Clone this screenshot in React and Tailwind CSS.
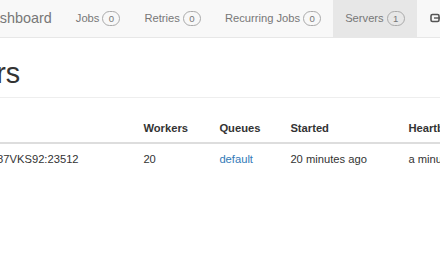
import React from "react";

function Badge({ n }) {
  return (
    <span className="ml-[3px] inline-flex h-[15px] min-w-[18px] shrink-0 items-center justify-center rounded-full border border-[#aaa] px-[5px] text-[9.6px] leading-none text-[#777]">
      {n}
    </span>
  );
}

function NavItem({ label, n, active }) {
  return (
    <div className={`flex h-full shrink-0 items-center whitespace-nowrap px-[12px] ${active ? "bg-[#e7e7e7]" : ""}`}>
      <span>{label}</span>
      <Badge n={n} />
    </div>
  );
}

export default function App() {
  return (
    <div
      className="relative h-[264px] w-[440px] overflow-hidden bg-white text-[#333]"
      style={{ fontFamily: '"Liberation Sans", Arial, Helvetica, sans-serif' }}
    >
      <div className="flex h-[38px] w-[700px] items-center border-b border-[#e7e7e7] bg-[#f8f8f8] text-[11.2px] text-[#777]">
        <div className="ml-[-77px] shrink-0 whitespace-nowrap pr-[12px] text-[14.4px] text-[#777]">Hangfire Dashboard</div>
        <NavItem label="Jobs" n="0" />
        <NavItem label="Retries" n="0" />
        <NavItem label="Recurring Jobs" n="0" />
        <NavItem label="Servers" n="1" active />
        <div className="flex h-full shrink-0 items-center gap-[4px] whitespace-nowrap px-[12px]">
          <svg width="11" height="11" viewBox="0 0 11 11" className="ml-[1px] shrink-0">
            <rect x="1" y="1.5" width="8" height="7" rx="1.5" fill="none" stroke="#555" strokeWidth="1.6" />
            <path d="M4 5h6" stroke="#555" strokeWidth="1.4" />
          </svg>
          <span>Back to site</span>
        </div>
      </div>

      <div className="ml-[-75px] w-[700px]">
        <h1 className="mt-[20px] ml-[-4px] border-b border-[#eee] pb-[7px] text-[28.8px] font-normal leading-[1.1] whitespace-nowrap text-[#333]">
          Servers
        </h1>
        <table className="mt-[16px] table-fixed border-collapse text-left text-[11.2px] leading-[16px]">
          <colgroup>
            <col className="w-[212px]" />
            <col className="w-[76px]" />
            <col className="w-[71px]" />
            <col className="w-[118px]" />
            <col className="w-[200px]" />
          </colgroup>
          <thead>
            <tr className="border-b-2 border-[#ddd]">
              <th className="px-[6.4px] py-[6.4px] font-bold whitespace-nowrap">Name</th>
              <th className="px-[6.4px] py-[6.4px] font-bold">Workers</th>
              <th className="px-[6.4px] py-[6.4px] font-bold">Queues</th>
              <th className="px-[6.4px] py-[6.4px] font-bold">Started</th>
              <th className="px-[6.4px] py-[6.4px] font-bold">Heartbeat</th>
            </tr>
          </thead>
          <tbody>
            <tr>
              <td className="px-[6.4px] py-[6.4px] whitespace-nowrap">DESKTOP-G87VKS92:23512</td>
              <td className="px-[6.4px] py-[6.4px]">20</td>
              <td className="px-[6.4px] py-[6.4px]">
                <span className="text-[#337ab7]">default</span>
              </td>
              <td className="px-[6.4px] py-[6.4px] whitespace-nowrap">20 minutes ago</td>
              <td className="px-[6.4px] py-[6.4px] whitespace-nowrap">a minute ago</td>
            </tr>
          </tbody>
        </table>
      </div>
    </div>
  );
}
